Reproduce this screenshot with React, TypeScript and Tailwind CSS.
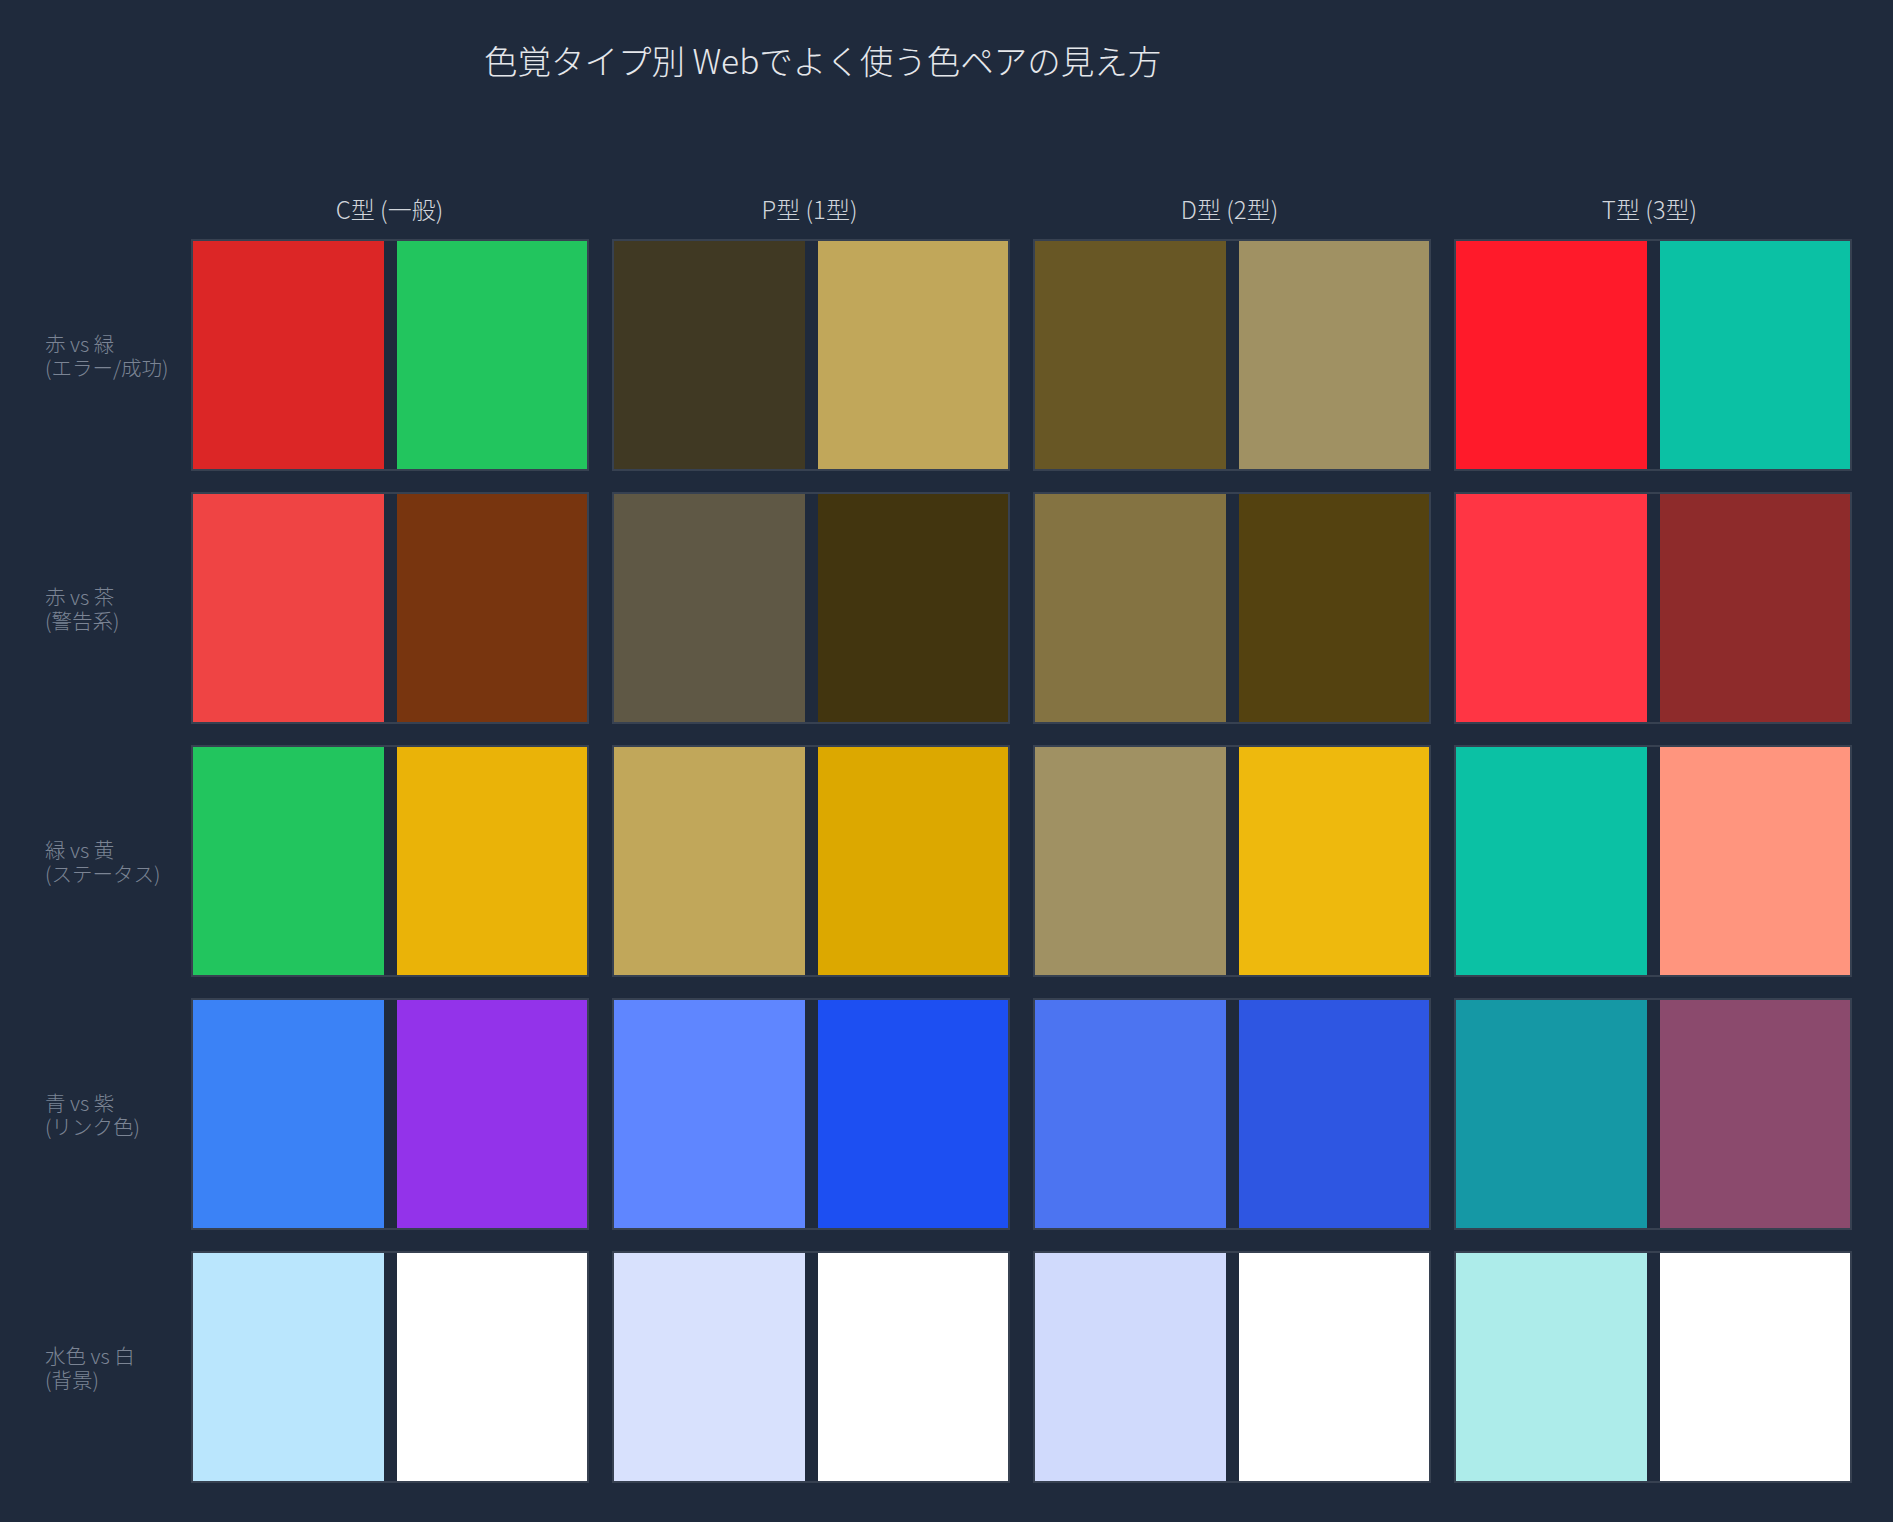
import React from "react";

const columns = ["C型 (一般)", "P型 (1型)", "D型 (2型)", "T型 (3型)"];

const rows: { label: string; sub: string; pairs: [string, string][] }[] = [
  {
    label: "赤 vs 緑",
    sub: "(エラー/成功)",
    pairs: [
      ["#dc2626", "#22c55e"],
      ["#403923", "#c1a75a"],
      ["#685725", "#a09163"],
      ["#ff1a2a", "#0bc1a4"],
    ],
  },
  {
    label: "赤 vs 茶",
    sub: "(警告系)",
    pairs: [
      ["#ef4444", "#78350f"],
      ["#5f5845", "#42350f"],
      ["#847342", "#544210"],
      ["#ff3544", "#8e2b2b"],
    ],
  },
  {
    label: "緑 vs 黄",
    sub: "(ステータス)",
    pairs: [
      ["#22c55e", "#eab308"],
      ["#c1a75a", "#dca800"],
      ["#a09163", "#eeb90d"],
      ["#0bc1a4", "#ff957e"],
    ],
  },
  {
    label: "青 vs 紫",
    sub: "(リンク色)",
    pairs: [
      ["#3b82f6", "#9333ea"],
      ["#5f86ff", "#1d4ff2"],
      ["#4c74f1", "#2e56e2"],
      ["#1598a5", "#8b4a6d"],
    ],
  },
  {
    label: "水色 vs 白",
    sub: "(背景)",
    pairs: [
      ["#bae6fd", "#ffffff"],
      ["#d8e1fd", "#ffffff"],
      ["#d0dafc", "#ffffff"],
      ["#adecea", "#ffffff"],
    ],
  },
];

export default function App() {
  return (
    <div
      className="w-[1893px] h-[1522px] bg-[#1f2a3c] text-[#e5e7eb] font-light"
      style={{ fontFamily: '"Noto Sans CJK JP", "Noto Sans", sans-serif' }}
    >
      {/* Title */}
      <div className="pt-[38px] pl-[484px] text-[33.5px] leading-[44px] text-[#e5e7eb]">
        色覚タイプ別 Webでよく使う色ペアの見え方
      </div>

      {/* Column headers */}
      <div className="flex gap-[23px] pl-[191px] mt-[111px]">
        {columns.map((c) => (
          <div key={c} className="w-[397px] text-center text-[24px] leading-[32px] text-[#d1d5db]">
            {c}
          </div>
        ))}
      </div>

      {/* Grid */}
      <div className="flex flex-col gap-[21px] mt-[14px]">
        {rows.map((r) => (
          <div key={r.label} className="flex items-center h-[232px]">
            <div className="w-[191px] pl-[45px] text-[20.5px] leading-[24px] text-[#7b8494]">
              <div>{r.label}</div>
              <div>{r.sub}</div>
            </div>
            <div className="flex gap-[23px] h-full">
              {r.pairs.map(([a, b], i) => (
                <div key={i} className="w-[398px] h-full flex border-2 border-[#374151] bg-[#1f2a3c]">
                  <div className="flex-1" style={{ background: a }} />
                  <div className="w-[13px]" />
                  <div className="flex-1" style={{ background: b }} />
                </div>
              ))}
            </div>
          </div>
        ))}
      </div>
    </div>
  );
}
